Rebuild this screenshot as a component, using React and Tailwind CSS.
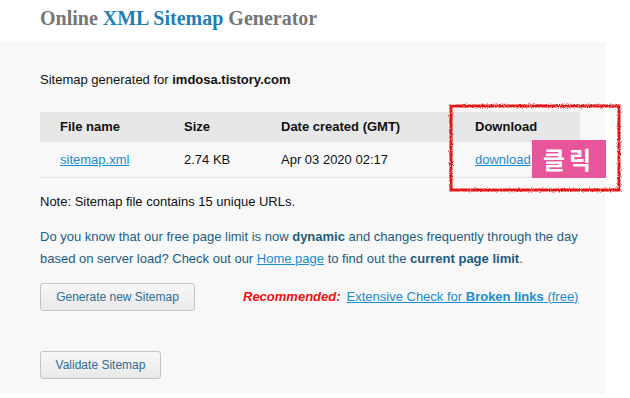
import React from "react";

const sans = { fontFamily: '"Liberation Sans", Arial, sans-serif' };

export default function App() {
  return (
    <div className="w-[630px] h-[398px] bg-white overflow-hidden relative" style={sans}>
      <h1
        className="pl-[40px] pt-[4px] h-[42px] text-[20px] font-bold text-[#767676] leading-[28px]"
        style={{ fontFamily: '"Liberation Serif", Georgia, serif' }}
      >
        Online <span className="text-[#1f7fb3]">XML Sitemap</span> Generator
      </h1>

      <div className="w-[605px] h-[352px] bg-[#f8f8f8] pl-[40px] pt-[28px] text-[13px] text-[#111]">
        <p className="leading-[20px]">
          Sitemap generated for <b>imdosa.tistory.com</b>
        </p>

        <table className="mt-[22px] w-[540px] border-collapse text-left">
          <thead>
            <tr className="bg-[#e7e7e7] h-[30px]">
              <th className="pl-[20px] w-[144px] font-bold">File name</th>
              <th className="w-[97px] font-bold">Size</th>
              <th className="w-[194px] font-bold">Date created (GMT)</th>
              <th className="font-bold">Download</th>
            </tr>
          </thead>
          <tbody>
            <tr className="h-[35px] border-b border-[#e4e4e4]">
              <td className="pl-[20px]">
                <a className="text-[#1b8bd0] underline">sitemap.xml</a>
              </td>
              <td>2.74 KB</td>
              <td>Apr 03 2020 02:17</td>
              <td>
                <a className="text-[#1b8bd0] underline">download</a>
              </td>
            </tr>
          </tbody>
        </table>

        <p className="mt-[14px] leading-[20px]">Note: Sitemap file contains 15 unique URLs.</p>

        <p className="mt-[14px] w-[545px] leading-[22px] text-[#1d5c80]">
          Do you know that our free page limit is now <b>dynamic</b> and changes frequently through the day
          based on server load? Check out our <a className="text-[#1b8bd0] underline">Home page</a> to find
          out the <b>current page limit</b>.
        </p>

        <div className="mt-[13px] flex items-center">
          <button className="w-[155px] h-[28px] rounded-[3px] border border-[#c4c4c4] bg-gradient-to-b from-[#f7f7f7] to-[#e9e9e9] text-[12px] text-[#2f6d92]">
            Generate new Sitemap
          </button>
          <span className="ml-[48px] font-bold italic text-[#ee1111]">Recommended:</span>
          <a className="ml-[6px] text-[#1b8bd0] underline">
            Extensive Check for <b>Broken links</b> (free)
          </a>
        </div>

        <button className="mt-[40px] w-[121px] h-[28px] rounded-[3px] border border-[#c4c4c4] bg-gradient-to-b from-[#f7f7f7] to-[#e9e9e9] text-[12px] text-[#2f6d92]">
          Validate Sitemap
        </button>
      </div>

      {/* hand-drawn red annotation box */}
      <svg className="absolute left-[446px] top-[101px]" width="178" height="94" viewBox="0 0 178 94">
        <defs>
          <filter id="rough" x="-10%" y="-10%" width="120%" height="120%">
            <feTurbulence type="fractalNoise" baseFrequency="0.9" numOctaves="2" seed="3" />
            <feDisplacementMap in="SourceGraphic" scale="3" />
          </filter>
        </defs>
        <rect x="5" y="5" width="168" height="84" fill="none" stroke="#e31414" strokeWidth="3" filter="url(#rough)" />
      </svg>
      <div
        className="absolute left-[532px] top-[140px] w-[74px] h-[38px] bg-[#e9559b] text-white text-[24px] font-bold flex items-center justify-center tracking-[4px]"
        style={{ fontFamily: '"Noto Sans CJK KR", sans-serif' }}
      >
        클릭
      </div>
    </div>
  );
}
